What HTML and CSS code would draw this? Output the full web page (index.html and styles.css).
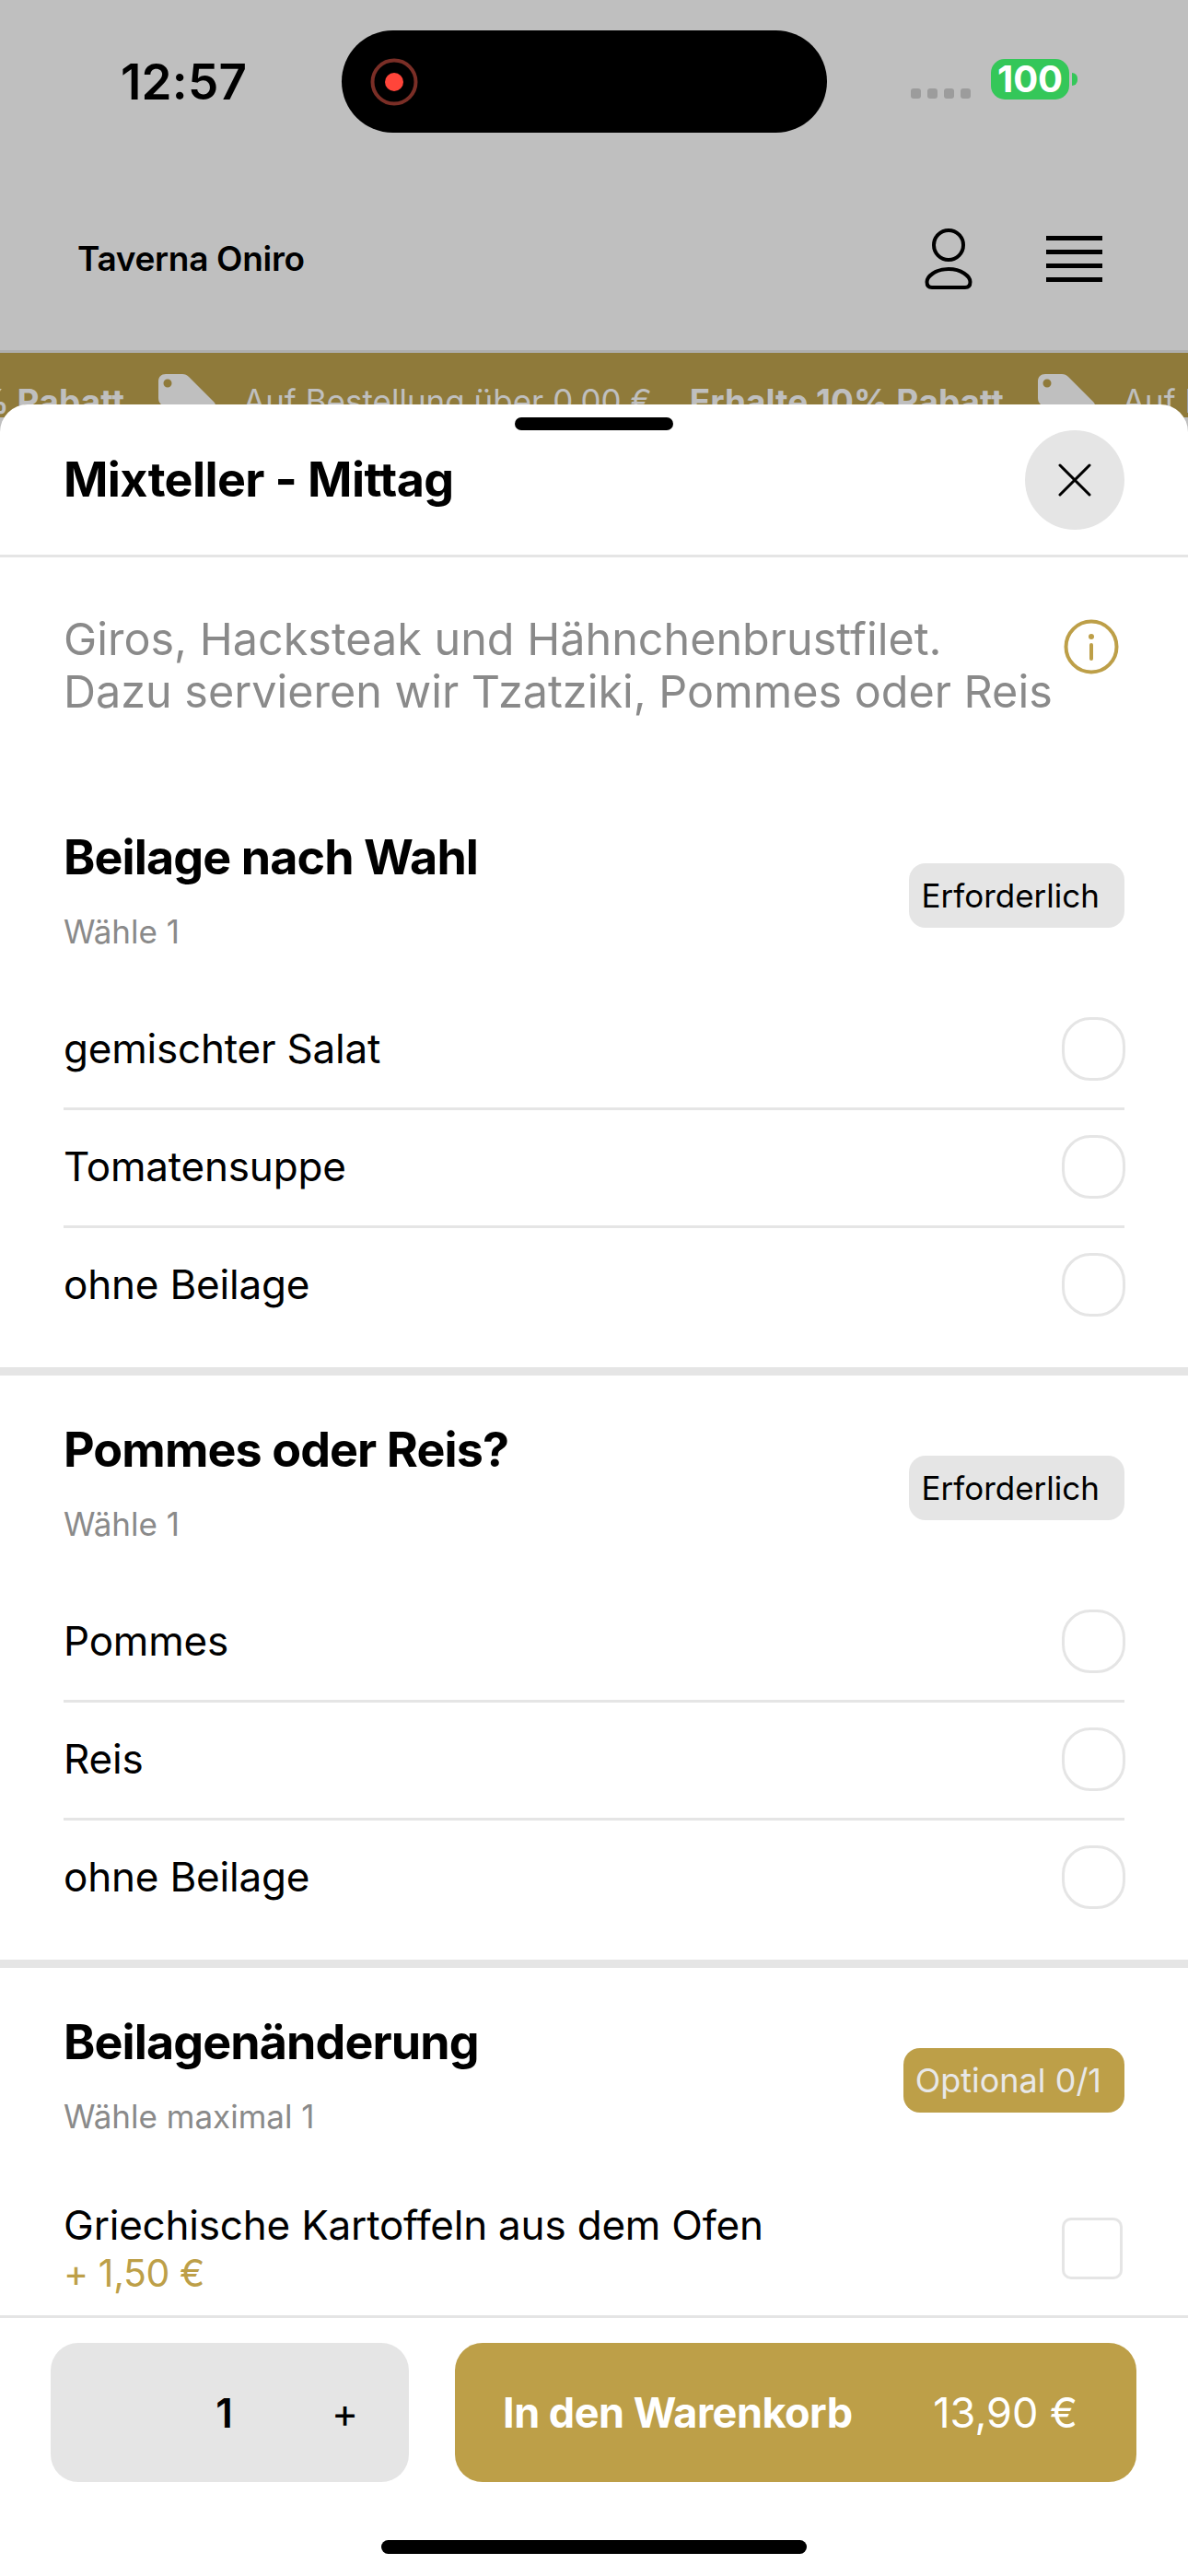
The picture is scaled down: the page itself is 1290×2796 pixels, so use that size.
FILE: index.html
```html
<!DOCTYPE html>
<html lang="de">
<head>
<meta charset="utf-8">
<title>Taverna Oniro</title>
<link rel="stylesheet" href="styles.css">
</head>
<body>

<header class="page-head">
  <div class="status-bar">
    <span class="clock">12:57</span>
    <div class="island">
      <svg class="rec" width="54" height="54" viewBox="0 0 54 54"><circle cx="27" cy="27" r="23.500" fill="none" stroke="#7a2e26" stroke-width="4"/><circle cx="27" cy="27" r="10" fill="#ff453a"/></svg>
    </div>
    <div class="status-right">
      <div class="signal"><i></i><i></i><i></i><i></i></div>
      <div class="battery">100</div>
      <div class="battery-tip"></div>
    </div>
  </div>
  <div class="nav">
    <span class="brand">Taverna Oniro</span>
    <svg class="icon-user" width="56" height="66" viewBox="0 0 56 66" fill="none" stroke="#000" stroke-width="4">
      <circle cx="28" cy="18" r="16"/>
      <path d="M28 44C42 44 51.500 52 51.500 58C51.500 62 49.500 64 46 64H10C6.500 64 4.500 62 4.500 58C4.500 52 14 44 28 44Z"/>
    </svg>
    <div class="burger"><i></i><i></i><i></i><i></i></div>
  </div>
</header>

<div class="promo">
  <div class="promo-track">
    <b>Erhalte 10% Rabatt</b>
    <svg class="tag" width="62" height="62" viewBox="0 0 62 62"><path fill-rule="evenodd" fill="#bfbfbf" d="M8 0h18c3 0 5 1 7 3l27 27c3 3 3 7 0 10L40 60c-3 3-7 3-10 0L3 33c-2-2-3-4-3-7V8c0-5 3-8 8-8zm2 5.500a4.500 4.500 0 1 0 0 9 4.500 4.500 0 0 0 0-9z"/></svg>
    <span>Auf Bestellung über 0,00 €</span>
    <b>Erhalte 10% Rabatt</b>
    <svg class="tag" width="62" height="62" viewBox="0 0 62 62"><path fill-rule="evenodd" fill="#bfbfbf" d="M8 0h18c3 0 5 1 7 3l27 27c3 3 3 7 0 10L40 60c-3 3-7 3-10 0L3 33c-2-2-3-4-3-7V8c0-5 3-8 8-8zm2 5.500a4.500 4.500 0 1 0 0 9 4.500 4.500 0 0 0 0-9z"/></svg>
    <span>Auf Bestellung über 0,00 €</span>
  </div>
</div>

<!-- bottom sheet, sits on top of the page -->
<div class="sheet">
  <div class="handle"></div>
  <div class="sheet-head">
    <h1>Mixteller - Mittag</h1>
    <button class="close">
      <svg width="36" height="36" viewBox="0 0 36 36"><path d="M2 2l32 32M34 2L2 34" stroke="#000" stroke-width="3" stroke-linecap="round"/></svg>
    </button>
  </div>

  <div class="sheet-body">
    <div class="desc">
      <p>Giros, Hacksteak und Hähnchenbrustfilet.<br>Dazu servieren wir Tzatziki, Pommes oder Reis</p>
      <svg class="info" width="60" height="60" viewBox="0 0 60 60" fill="none" stroke="#bd9f48" stroke-width="4">
        <circle cx="30" cy="30" r="27.500"/>
        <path d="M30 28v15" stroke-linecap="round"/>
        <circle cx="30" cy="19" r="3" fill="#bd9f48" stroke="none"/>
      </svg>
    </div>

    <section class="group">
      <div class="group-head">
        <div class="group-title">
          <h2>Beilage nach Wahl</h2>
          <div class="hint">Wähle 1</div>
        </div>
        <span class="badge">Erforderlich</span>
      </div>
      <div class="row"><span>gemischter Salat</span><i class="radio"></i></div>
      <div class="row"><span>Tomatensuppe</span><i class="radio"></i></div>
      <div class="row"><span>ohne Beilage</span><i class="radio"></i></div>
    </section>

    <section class="group">
      <div class="group-head">
        <div class="group-title">
          <h2>Pommes oder Reis?</h2>
          <div class="hint">Wähle 1</div>
        </div>
        <span class="badge">Erforderlich</span>
      </div>
      <div class="row"><span>Pommes</span><i class="radio"></i></div>
      <div class="row"><span>Reis</span><i class="radio"></i></div>
      <div class="row"><span>ohne Beilage</span><i class="radio"></i></div>
    </section>

    <section class="group">
      <div class="group-head">
        <div class="group-title">
          <h2>Beilagenänderung</h2>
          <div class="hint">Wähle maximal 1</div>
        </div>
        <span class="badge badge-gold">Optional 0/1</span>
      </div>
      <div class="row row-price">
        <div>
          <div>Griechische Kartoffeln aus dem Ofen</div>
          <div class="price">+ 1,50 €</div>
        </div>
        <i class="check"></i>
      </div>
    </section>
  </div>

  <footer class="sheet-foot">
    <div class="actions">
      <div class="qty"><b>1</b><span>+</span></div>
      <button class="add"><b>In den Warenkorb</b><span>13,90 €</span></button>
    </div>
    <div class="home-bar"></div>
  </footer>
</div>

</body>
</html>
```
FILE: styles.css
```css
* { box-sizing: border-box; }
html, body { margin: 0; }
body {
  width: 1290px;
  height: 2796px;
  position: relative;
  overflow: hidden;
  background: #bfbfbf;
  font-family: Inter, "Liberation Sans", sans-serif;
  color: #000;
}
h1, h2, p { margin: 0; }

/* top of the page, greyed out behind the sheet */
.page-head {
  height: 383px;
  border-bottom: 3px solid #aeaeae;
}
.status-bar {
  display: flex;
  align-items: flex-start;
  padding-top: 33px;
  height: 200px;
}
.clock {
  width: 371px;
  padding: 25px 0 0 131px;
  font-size: 53px;
  line-height: 62px;
  font-weight: 600;
  letter-spacing: 0.2px;
}
.island {
  width: 527px;
  height: 111px;
  border-radius: 56px;
  background: #000;
  display: flex;
  align-items: center;
  padding-left: 30px;
}
.status-right {
  display: flex;
  align-items: flex-start;
  padding: 31px 0 0 91px;
}
.signal {
  display: flex;
  gap: 7px;
  padding: 32px 22px 0 0;
}
.signal i {
  width: 11px;
  height: 11px;
  border-radius: 3px;
  background: #9c9c9c;
}
.battery {
  width: 85px;
  height: 44px;
  border-radius: 15px;
  background: #34c759;
  color: #fff;
  font-size: 40px;
  font-weight: 700;
  line-height: 44px;
  text-align: center;
}
.battery-tip {
  width: 6px;
  height: 14px;
  margin: 15px 0 0 3px;
  border-radius: 0 7px 7px 0;
  background: #34c759;
}
.nav {
  display: flex;
  align-items: center;
  padding: 0 93px 0 84px;
  height: 165px;
  margin-top: -2px;
}
.brand {
  flex: 1;
  font-size: 37px;
  font-weight: 600;
  letter-spacing: -0.3px;
}
.icon-user { margin-right: 78px; }
.burger {
  width: 61px;
  display: flex;
  flex-direction: column;
  gap: 10px;
}
.burger i {
  height: 5px;
  background: #000;
}

.promo {
  height: 70px;
  background: #8f7a3a;
  overflow: hidden;
  color: #bfbfbf;
}
.promo-track {
  display: flex;
  align-items: flex-start;
  white-space: nowrap;
  font-size: 35px;
  margin-left: -206px;
  padding-top: 23px;
}
.promo-track b {
  font-size: 37px;
  font-weight: 700;
  margin: 7px 37px 0 0;
}
.promo-track span { margin: 8px 41px 0 0; }
.tag { margin: 0 30px 0 0; flex: none; }

/* bottom sheet */
.sheet {
  position: absolute;
  left: 0;
  right: 0;
  top: 439px;
  bottom: 0;
  display: flex;
  flex-direction: column;
  background: #fff;
  border-radius: 30px 30px 0 0;
}
.handle {
  position: absolute;
  left: 559px;
  top: 14px;
  width: 172px;
  height: 14px;
  border-radius: 7px;
  background: #000;
}
.sheet-head {
  display: flex;
  align-items: center;
  justify-content: space-between;
  height: 166px;
  padding: 28px 69px 27px 69px;
  border-bottom: 3px solid #e5e5e5;
}
h1 {
  font-size: 52px;
  font-weight: 700;
  letter-spacing: -0.6px;
  margin-top: -2px;
}
.close {
  width: 108px;
  height: 108px;
  border: 0;
  padding: 0;
  border-radius: 50%;
  background: #e5e5e5;
  display: flex;
  align-items: center;
  justify-content: center;
}
.sheet-body {
  flex: 1;
  overflow: hidden;
}
.desc {
  display: flex;
  justify-content: space-between;
  align-items: flex-start;
  height: 245px;
  padding: 60px 75px 0 69px;
  color: #8a8a8a;
  font-size: 48.500px;
  line-height: 57px;
}
.info { margin-top: 7px; }

.group {
  padding: 49px 69px 26px 69px;
  border-bottom: 9px solid #e5e5e5;
}
.group-head {
  display: flex;
  justify-content: space-between;
  align-items: center;
  height: 146px;
  margin-bottom: 32px;
}
.group-title { align-self: flex-start; }
h2 {
  font-size: 52px;
  line-height: 64px;
  font-weight: 700;
  letter-spacing: -0.9px;
}
.hint {
  margin-top: 26px;
  font-size: 35px;
  line-height: 44px;
  color: #8a8a8a;
}
.badge {
  height: 70px;
  padding: 0 27px 0 14px;
  border-radius: 18px;
  background: #e5e5e5;
  font-size: 35px;
  line-height: 70px;
}
.badge-gold {
  background: #bd9f48;
  color: #e8e8e8;
  padding: 0 25px 0 13px;
  font-size: 36px;
}
.row {
  display: flex;
  justify-content: space-between;
  align-items: center;
  height: 128px;
  font-size: 44px;
  letter-spacing: -0.2px;
  border-bottom: 3px solid #e5e5e5;
}
.row > span { margin-top: -3px; }
.row:last-child {
  height: 125px;
  border-bottom: 0;
}
.row-price:last-child { height: 154px; }
.radio {
  width: 69px;
  height: 69px;
  margin: -2px -1px 0 0;
  border: 3px solid #e5e5e5;
  border-radius: 31px;
}
.check {
  width: 66px;
  height: 67px;
  margin-right: 2px;
  border: 3px solid #e5e5e5;
  border-radius: 10px;
}
.price {
  font-size: 41px;
  letter-spacing: -0.4px;
  color: #bd9f48;
}

.sheet-foot {
  border-top: 3px solid #e5e5e5;
  height: 283px;
  padding: 27px 56px 0 55px;
}
.actions {
  display: flex;
  gap: 50px;
}
.qty {
  width: 389px;
  height: 151px;
  border-radius: 30px;
  background: #e5e5e5;
  display: flex;
  align-items: center;
  justify-content: flex-end;
  padding-right: 55px;
  font-size: 44px;
}
.qty b { font-weight: 600; margin-right: 107px; }
.add {
  flex: 1;
  height: 151px;
  border: 0;
  border-radius: 30px;
  background: #bd9f48;
  color: #fff;
  display: flex;
  align-items: center;
  justify-content: space-between;
  padding: 0 64px 0 52px;
  font-family: inherit;
  font-size: 45px;
}
.add b { font-weight: 700; letter-spacing: -0.5px; }
.home-bar {
  width: 462px;
  height: 15px;
  margin: 63px auto 0;
  border-radius: 8px;
  background: #000;
}
```
